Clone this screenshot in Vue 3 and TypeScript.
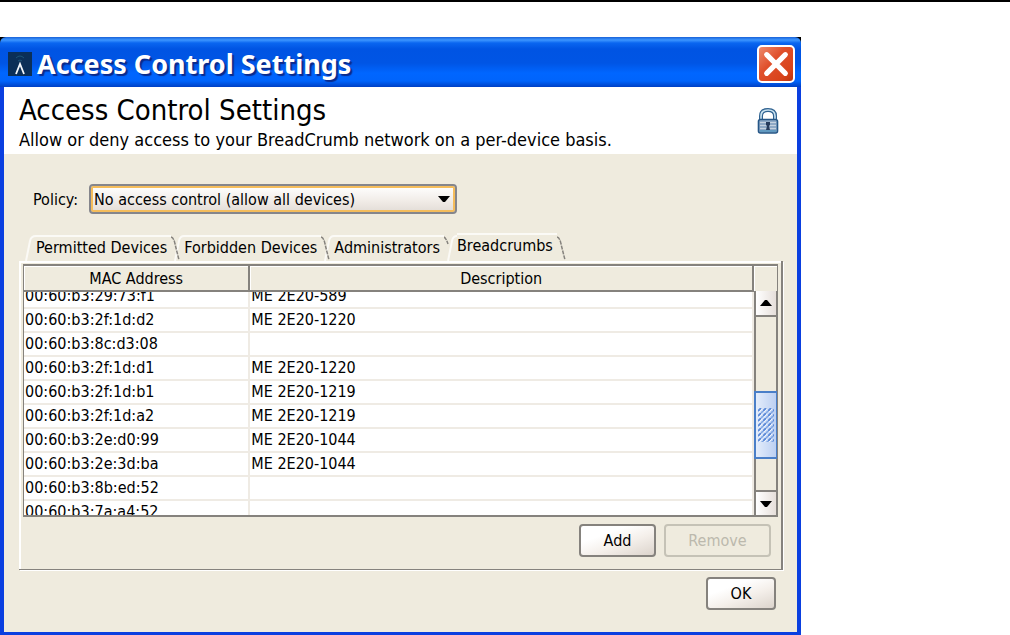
<script setup lang="ts">
import { onMounted, ref } from 'vue'

interface Device {
  mac: string
  description: string
}

const policies: string[] = ['No access control (allow all devices)']
const policy = ref(policies[0])

const tabs: string[] = ['Permitted Devices', 'Forbidden Devices', 'Administrators', 'Breadcrumbs']
const activeTab = ref('Breadcrumbs')

const devices: Device[] = [
  { mac: '00:60:b3:29:73:f1', description: 'ME 2E20-589' },
  { mac: '00:60:b3:2f:1d:d2', description: 'ME 2E20-1220' },
  { mac: '00:60:b3:8c:d3:08', description: '' },
  { mac: '00:60:b3:2f:1d:d1', description: 'ME 2E20-1220' },
  { mac: '00:60:b3:2f:1d:b1', description: 'ME 2E20-1219' },
  { mac: '00:60:b3:2f:1d:a2', description: 'ME 2E20-1219' },
  { mac: '00:60:b3:2e:d0:99', description: 'ME 2E20-1044' },
  { mac: '00:60:b3:2e:3d:ba', description: 'ME 2E20-1044' },
  { mac: '00:60:b3:8b:ed:52', description: '' },
  { mac: '00:60:b3:7a:a4:52', description: '' },
]

const viewport = ref<HTMLElement | null>(null)

onMounted(() => {
  // The list opens scrolled part of a row down.
  if (viewport.value) viewport.value.scrollTop = 7
})
</script>

<template>
  <div class="page">
    <hr class="rule" />
    <main class="window">
      <header class="titlebar">
        <svg class="app-icon" viewBox="0 0 24 24" aria-hidden="true">
          <rect width="24" height="24" fill="#0b2f57" />
          <path d="M8 6q4-4 8 0M10 9q2-2 4 0" fill="none" stroke="#1c5476" stroke-width="1" />
          <path d="M8 22l4-10 4 10" fill="none" stroke="#f2f6fa" stroke-width="1.8" />
        </svg>
        <span class="window-title">Access Control Settings</span>
        <button class="close" type="button" aria-label="Close">
          <svg viewBox="0 0 24 24" aria-hidden="true">
            <path d="M4 4l16 16M20 4L4 20" stroke="#fff" stroke-width="4.4" stroke-linecap="round" />
          </svg>
        </button>
      </header>

      <div class="content">
        <section class="banner">
          <div>
            <h1>Access Control Settings</h1>
            <p>Allow or deny access to your BreadCrumb network on a per-device basis.</p>
          </div>
          <svg class="lock" viewBox="0 0 22 26" aria-hidden="true">
            <path d="M4 12V8q0-6 7-6t7 6v4" fill="none" stroke="#2f6290" stroke-width="4" />
            <path d="M4 12V8q0-6 7-6t7 6v4" fill="none" stroke="#c9e2f0" stroke-width="1.6" />
            <rect x="1.5" y="11.5" width="19" height="13.5" rx="2" fill="#8fa9c6" stroke="#265787" stroke-width="1.6" />
            <path d="M3 14.5h16M3 17.5h16M3 20.5h16" stroke="#c6d2e0" stroke-width="1" />
            <path d="M3 23h16" stroke="#4d93bd" stroke-width="1.4" />
            <path d="M9 14h4v3l-1 1 1 4H9l1-4-1-1z" fill="#263b5c" />
          </svg>
        </section>

        <div class="policy">
          <label for="policy">Policy:</label>
          <div class="combo">
            <select id="policy" v-model="policy">
              <option v-for="p in policies" :key="p">{{ p }}</option>
            </select>
            <svg class="combo-arrow" viewBox="0 0 14 8" aria-hidden="true"><path d="M1 0h12L8 6H6z" /></svg>
          </div>
        </div>

        <div class="tabs" role="tablist">
          <svg class="lead" viewBox="0 0 12 26" aria-hidden="true">
            <path d="M2 26L6 6q1-5 6-5" fill="none" stroke="#fbfaf6" stroke-width="2" />
          </svg>
          <template v-for="(t, i) in tabs" :key="t">
            <button
              type="button"
              role="tab"
              class="tab"
              :class="{ active: t === activeTab }"
              :aria-selected="t === activeTab"
              @click="activeTab = t"
            >{{ t }}</button>
            <svg class="edge" viewBox="0 0 13 26" aria-hidden="true">
              <path v-if="i < tabs.length - 1" d="M4 26L8 6q1-5 5-5" fill="none" stroke="#fbfaf6" stroke-width="2" />
              <path
                :d="tabs[i + 1] === activeTab ? 'M0 2q2 1 4 7' : 'M0 2q3 1 4 7l4 16'"
                fill="none" stroke="#85827d" stroke-width="1.5" stroke-dasharray="4 1"
              />
            </svg>
          </template>
        </div>

        <section class="pane" role="tabpanel">
          <div class="grid">
            <div ref="viewport" class="viewport">
              <table>
                <colgroup><col class="col-mac" /><col /></colgroup>
                <thead>
                  <tr><th>MAC Address</th><th>Description</th></tr>
                </thead>
                <tbody>
                  <tr v-for="d in devices" :key="d.mac">
                    <td>{{ d.mac }}</td>
                    <td>{{ d.description }}</td>
                  </tr>
                </tbody>
              </table>
            </div>
            <div class="scrollbar">
              <div class="corner"></div>
              <button class="arrow up" type="button" aria-label="Scroll up">
                <svg viewBox="0 0 14 8" aria-hidden="true"><path d="M1 7h12L8 1H6z" /></svg>
              </button>
              <div class="track">
                <div class="thumb">
                  <svg viewBox="0 0 16 34" aria-hidden="true">
                    <defs>
                      <pattern id="grip" width="5" height="5" patternUnits="userSpaceOnUse">
                        <path d="M0 3l3-3" stroke="#5b8ad8" stroke-width="1.8" />
                        <path d="M3 5l2-2" stroke="#7fa5e3" stroke-width="1.6" />
                        <path d="M1 4l3-3" stroke="#eef4fd" stroke-width="1" />
                      </pattern>
                    </defs>
                    <rect width="16" height="34" fill="url(#grip)" />
                  </svg>
                </div>
              </div>
              <button class="arrow down" type="button" aria-label="Scroll down">
                <svg viewBox="0 0 14 8" aria-hidden="true"><path d="M1 1h12L8 7H6z" /></svg>
              </button>
            </div>
          </div>
          <div class="actions">
            <button class="btn add" type="button">Add</button>
            <button class="btn remove" type="button" disabled>Remove</button>
          </div>
        </section>

        <footer class="footer">
          <button class="btn ok" type="button">OK</button>
        </footer>
      </div>
    </main>
  </div>
</template>

<style>
body {
  margin: 0;
  background: #fff;
}
</style>

<style scoped>
.page {
  display: grid;
  grid-template-columns: minmax(0, 801fr) 209fr;
  font-family: 'DejaVu Sans Condensed', 'DejaVu Sans', sans-serif;
  font-size: 16px;
  color: #000;
}

.page * {
  box-sizing: border-box;
}

button,
select {
  font: inherit;
  color: inherit;
}

.rule {
  grid-column: 1 / -1;
  width: 100%;
  height: 2px;
  margin: 0 0 35px;
  border: 0;
  background: #000;
}

.window {
  background: #000;
}

.titlebar {
  display: flex;
  align-items: center;
  gap: 5px;
  height: 50px;
  padding: 4px 6px 0 8px;
  border-radius: 6px 6px 0 0;
  background: linear-gradient(#1a62d8 0, #3d96ff 3px, #0a66f0 6px, #0054e3 12px, #0055e5 26px, #0066ff 36px, #0064fb 44px, #0040c4 50px);
}

.app-icon {
  flex: none;
  width: 24px;
  height: 24px;
}

.window-title {
  flex: 1;
  font-family: 'Noto Sans', 'Open Sans', sans-serif;
  font-size: 27px;
  font-weight: 700;
  line-height: 32px;
  white-space: nowrap;
  color: #fff;
  text-shadow: 2px 2px 1px #0a2a8c;
}

.close {
  display: flex;
  flex: none;
  align-items: center;
  justify-content: center;
  width: 38px;
  height: 38px;
  padding: 0;
  border: 2px solid #fff;
  border-radius: 5px;
  background: linear-gradient(135deg, #ee8a6c, #e0502c 40%, #d8431a 80%, #b8340f);
}

.close svg {
  flex: none;
  width: 28px;
  height: 28px;
}

.content {
  padding-bottom: 22px;
  border: solid #0a3fe0;
  border-width: 0 4px 3px;
  background: #efebde;
}

.banner {
  display: flex;
  align-items: center;
  justify-content: space-between;
  height: 67px;
  padding: 0 18px 0 15px;
  background: #fff;
}

h1 {
  margin: 0;
  padding-top: 2px;
  font-size: 29px;
  font-weight: 400;
  line-height: 36px;
  white-space: nowrap;
}

.banner p {
  margin: 0;
  font-size: 18px;
  line-height: 24px;
  white-space: nowrap;
}

.lock {
  flex: none;
  width: 22px;
  height: 26px;
}

.policy {
  display: flex;
  align-items: center;
  gap: 11px;
  margin-top: 30px;
  padding-left: 29px;
}

.combo {
  position: relative;
  width: 368px;
}

.combo select {
  display: block;
  width: 100%;
  height: 30px;
  padding: 0 24px 0 3px;
  appearance: none;
  border: 2px solid #85868c;
  border-radius: 4px;
  outline: none;
  background: linear-gradient(#fff, #f0ebe6 60%, #e2dcd6);
  box-shadow: inset 0 0 0 2px #f5bd5c;
}

.combo-arrow {
  position: absolute;
  top: 12px;
  right: 6px;
  width: 14px;
  height: 8px;
  pointer-events: none;
}

.tabs {
  display: flex;
  align-items: flex-end;
  margin-top: 19px;
  padding-left: 20px;
}

.lead,
.edge {
  flex: none;
  width: 12px;
  height: 26px;
}

.edge {
  width: 13px;
}

.tab {
  height: 26px;
  padding: 0 4px 2px 0;
  border: 0;
  border-top: 2px solid #fbfaf6;
  background: none;
  line-height: 22px;
  white-space: nowrap;
}

.tab.active {
  height: 28px;
  padding-bottom: 6px;
}

.pane {
  margin: 0 14px 0 15px;
  border: solid #85827d;
  border-width: 0 2px 1px 0;
  box-shadow: inset 2px 2px 0 #fff, 1px 1px 0 #fff;
  padding: 3px 3px 12px 4px;
}

.grid {
  display: flex;
  border: solid #85827d;
  border-width: 2px 1px 2px 1px;
}

.viewport {
  flex: 1;
  min-width: 0;
  height: 249px;
  overflow: hidden;
  background: #fff;
}

table {
  width: 100%;
  table-layout: fixed;
  border-collapse: separate;
  border-spacing: 0;
}

.col-mac {
  width: 31%;
}

th {
  position: sticky;
  top: 0;
  height: 26px;
  padding: 2px 0 0;
  border: solid #85827d;
  border-width: 0 2px 2px 0;
  background: #efebde;
  box-shadow: inset 1px 1px 0 #fff;
  font-weight: 400;
  line-height: 22px;
}

td {
  height: 24px;
  padding: 0 0 0 1px;
  border: solid #efebe4;
  border-width: 0 2px 2px 0;
  line-height: 22px;
  white-space: nowrap;
}

.scrollbar {
  display: flex;
  flex: none;
  flex-direction: column;
  width: 23px;
}

.corner {
  height: 25px;
  background: #efebde;
  box-shadow: inset 1px 1px 0 #fff;
}

.arrow {
  display: flex;
  flex: none;
  align-items: center;
  justify-content: center;
  height: 26px;
  padding: 0;
  border: solid #85827d;
  border-width: 0 1px 2px 2px;
  background: linear-gradient(90deg, #fff, #e6dfda);
}

.arrow.down {
  height: 25px;
  border-width: 2px 1px 0 2px;
}

.arrow svg {
  flex: none;
  width: 14px;
  height: 8px;
}

.track {
  flex: 1;
  padding-top: 74px;
  border: solid #85827d;
  border-width: 0 1px 0 2px;
  background: #efebde;
}

.thumb {
  display: flex;
  align-items: center;
  justify-content: center;
  height: 68px;
  margin: 0 -1px 0 -2px;
  border: 2px solid #4a7fc8;
  border-right-width: 1px;
  background: linear-gradient(90deg, #e4edfb, #bcd0f2);
}

.thumb svg {
  width: 16px;
  height: 34px;
}

.actions {
  display: flex;
  justify-content: flex-end;
  gap: 8px;
  margin-top: 7px;
  padding-right: 7px;
}

.btn {
  height: 33px;
  padding: 0;
  border: 2px solid #85827d;
  border-radius: 4px;
  background: linear-gradient(160deg, #fff 30%, #f4efea 60%, #dcd4cc);
  line-height: 24px;
}

.add {
  width: 77px;
}

.remove {
  width: 107px;
}

.remove:disabled {
  border-color: #c5c2b6;
  background: none;
  color: #bcb9ad;
}

.footer {
  display: flex;
  justify-content: flex-end;
  margin-top: 7px;
  padding-right: 21px;
}

.ok {
  width: 70px;
}
</style>
